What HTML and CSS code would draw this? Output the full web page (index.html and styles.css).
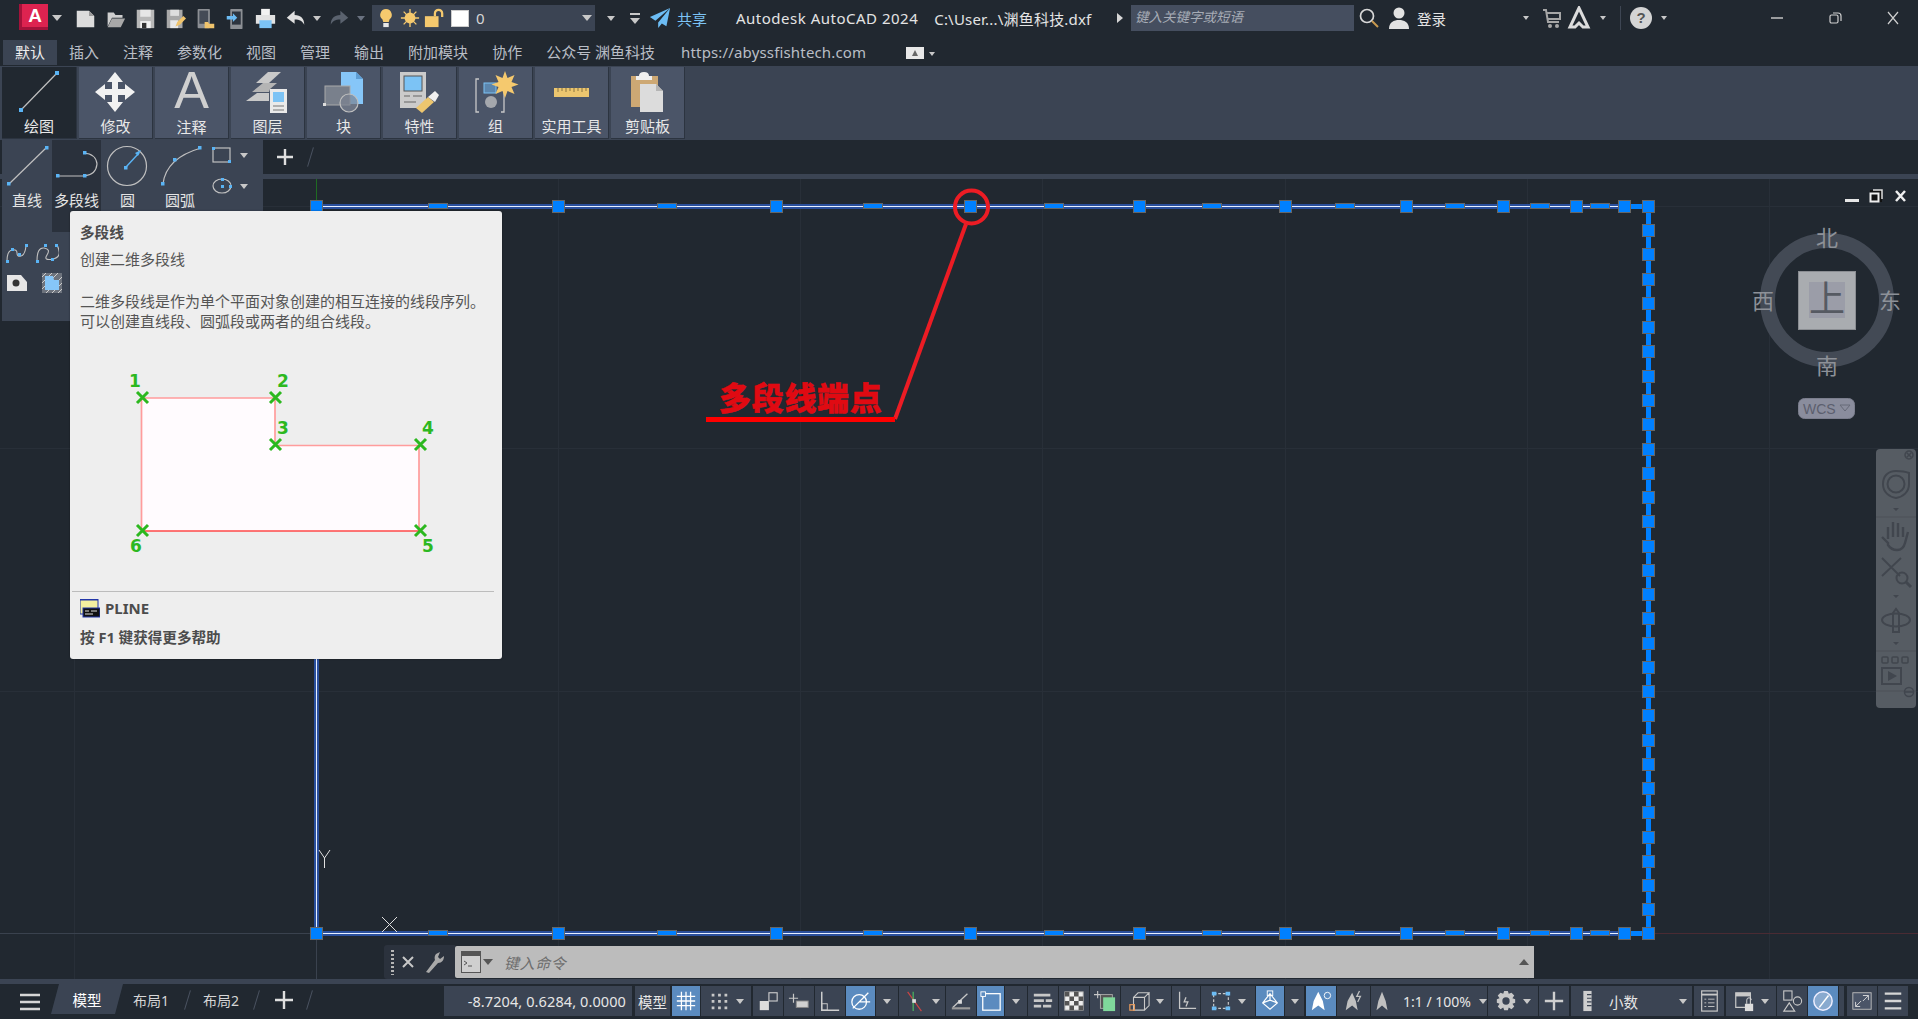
FILE: index.html
```html
<!DOCTYPE html>
<html lang="zh-CN">
<head>
<meta charset="utf-8">
<title>Autodesk AutoCAD 2024</title>
<link rel="stylesheet" href="styles.css">
</head>
<body>
<div class="app">

<header class="titlebar">
  <div class="logo"><span>A</span></div>
  <i class="dd dd-logo"></i>
  <button class="qbtn"><svg viewBox="0 0 24 24"><path d="M2 3h14l6 6v13H2z" fill="#dcdcdc"/><path d="M16 3v6h6" fill="#9a9a9a"/></svg></button>
  <button class="qbtn"><svg viewBox="0 0 24 24"><path d="M3 21V5h7l2 3h8v3H8z" fill="#cfcfcf"/><path d="M3 22l5-10h15l-5 10z" fill="#a8a8a8"/></svg></button>
  <button class="qbtn"><svg viewBox="0 0 24 24"><path d="M2 2h20v21H2z" fill="#b8b8b8"/><path d="M6 2h12v8H6z" fill="#e6e6e6"/><path d="M6 15h12v8H6z" fill="#f2f2f2"/><path d="M8 17h5v6H8z" fill="#333"/></svg></button>
  <button class="qbtn"><svg viewBox="0 0 24 24"><path d="M2 2h18v21H2z" fill="#a8a8a8"/><path d="M6 2h10v7H6z" fill="#dedede"/><path d="M6 14h9v9H6z" fill="#e8e8e8"/><path d="M12 21l2-5 7-7 3 3-7 7z" fill="#f0c46c"/></svg></button>
  <button class="qbtn"><svg viewBox="0 0 24 24"><rect x="3" y="1" width="14" height="22" rx="1" fill="#8c8f94"/><rect x="5" y="3" width="10" height="15" fill="#444b56"/><path d="M11 16h4l1 2h6v5H11z" fill="#f0c46c"/></svg></button>
  <button class="qbtn"><svg viewBox="0 0 24 24"><rect x="6" y="1" width="14" height="23" rx="1" fill="#8c8f94"/><rect x="8" y="4" width="10" height="15" fill="#2d343e"/><path d="M2 9h7V6l5 5-5 5v-3H2z" fill="#6cbcf4"/></svg></button>
  <button class="qbtn"><svg viewBox="0 0 24 24"><path d="M7 1h10v7H7z" fill="#f2f2f2"/><path d="M1 8h22v10H1z" fill="#e2e2e2"/><path d="M5 14h14v9H5z" fill="#7cc3f5"/></svg></button>
  <button class="qbtn"><svg viewBox="0 0 24 24"><path d="M2 11l9-8v5c7 0 11 4 11 11-2-4-5-6-11-6v5z" fill="#e0e0e0"/></svg></button>
  <i class="dd dd14"></i>
  <button class="qbtn"><svg viewBox="0 0 24 24"><path d="M22 11l-9-8v5C6 8 2 12 2 19c2-4 5-6 11-6v5z" fill="#5a626e"/></svg></button>
  <i class="dd dd14 dim"></i>
  <div class="layer-combo">
    <svg class="lic" viewBox="0 0 22 22"><path d="M11 1a6.500 6.500 0 0 1 4 11.500l-1 3H8l-1-3A6.500 6.500 0 0 1 11 1z" fill="#f5c96e"/><path d="M8 16.500h6V21H8z" fill="#e8e8e8"/></svg>
    <svg class="lic" viewBox="0 0 22 22"><circle cx="11" cy="11" r="6" fill="#f5c96e"/><path d="M11 1v20M1 11h20M4 4l14 14M18 4L4 18" stroke="#f5c96e" stroke-width="1.500"/></svg>
    <svg class="lic" viewBox="0 0 22 22"><path d="M12 9V6a4 4 0 0 1 8 0v4" fill="none" stroke="#f5c96e" stroke-width="2.500"/><rect x="1" y="9" width="15" height="12" fill="#f5c96e"/></svg>
    <span class="swatch"></span>
    <span class="layer-name">0</span>
    <i class="dd dd-end"></i>
  </div>
  <i class="dd dd-qa"></i>
  <svg class="qa-more" viewBox="0 0 14 14"><path d="M2 2h10v2H2z" fill="#c8c8c8"/><path d="M2 7h10l-5 6z" fill="#c8c8c8"/></svg>
  <svg class="plane" viewBox="0 0 24 24"><path d="M23 1L1 11l6 4L23 1 10 17v6l4-5 5 3z" fill="#6cbcf4"/></svg>
  <span class="share">共享</span>
  <div class="title"><span class="t1">Autodesk AutoCAD 2024</span><span class="t2">C:\User...\渊鱼科技.dxf</span></div>
  <i class="ar"></i>
  <div class="search">键入关键字或短语</div>
  <svg class="ic-mag" viewBox="0 0 22 22"><circle cx="9" cy="9" r="6.500" fill="none" stroke="#d8d8d8" stroke-width="1.700"/><path d="M14 14l6 6" stroke="#c99a50" stroke-width="2"/></svg>
  <svg class="ic-person" viewBox="0 0 22 24"><circle cx="11" cy="7" r="5.500" fill="#e2e2e2"/><path d="M1 23c0-7 5-9 10-9s10 2 10 9z" fill="#e2e2e2"/></svg>
  <span class="login">登录</span>
  <i class="dd dd-login"></i>
  <svg class="ic-cart" viewBox="0 0 20 22"><path d="M1 3h3l2 12h11M5 6h13v6H6" fill="none" stroke="#a6a6a6" stroke-width="2"/><circle cx="8" cy="19" r="2" fill="#a6a6a6"/><circle cx="15" cy="19" r="2" fill="#a6a6a6"/></svg>
  <svg class="ic-a" viewBox="0 0 24 24"><path d="M12 2L3 21h5l4-4 4 4h5z" fill="none" stroke="#dcdcdc" stroke-width="3"/></svg>
  <i class="dd dd-a"></i>
  <i class="tsep"></i>
  <span class="help">?</span>
  <i class="dd dd-help"></i>
  <svg class="win min" viewBox="0 0 14 14"><path d="M1 7h12" stroke="#cfcfcf" stroke-width="1.400"/></svg>
  <svg class="win max" viewBox="0 0 14 14"><rect x="2" y="4" width="8" height="8" rx="1.500" fill="none" stroke="#cfcfcf" stroke-width="1.200"/><path d="M5 2h5q3 0 3 3v5" fill="none" stroke="#cfcfcf" stroke-width="1.200"/></svg>
  <svg class="win cls" viewBox="0 0 14 14"><path d="M2 1l10 12M12 1L2 13" stroke="#cfcfcf" stroke-width="1.200"/></svg>
</header>

<nav class="tabs">
  <span class="tab on">默认</span><span class="tab">插入</span><span class="tab">注释</span><span class="tab">参数化</span><span class="tab">视图</span><span class="tab">管理</span><span class="tab">输出</span><span class="tab">附加模块</span><span class="tab">协作</span><span class="tab wide">公众号 渊鱼科技</span><span class="tab link">https://abyssfishtech.com</span>
  <span class="tab-box"><svg viewBox="0 0 18 12"><path d="M9 3l3 6H6z" fill="#666"/></svg></span><i class="dd dd-tab"></i>
</nav>

<section class="ribbon">
  <div class="rb active"><svg viewBox="0 0 74 44"><path d="M19 40L55 3" stroke="#c0c0c0" stroke-width="1.200"/><rect x="17" y="38" width="4" height="4" fill="#5ab4f5"/><rect x="53" y="1" width="4" height="4" fill="#5ab4f5"/></svg><span>绘图</span></div>
  <div class="rb"><svg viewBox="0 0 74 44"><path d="M36 2l8 10h-5v7h7v-5l10 8-10 8v-5h-7v7h5l-8 10-8-10h5v-7h-7v5l-10-8 10-8v5h7v-7h-5z" fill="#f2f2f2"/></svg><span>修改</span></div>
  <div class="rb"><span class="big-a">A</span><span>注释</span></div>
  <div class="rb"><svg viewBox="0 0 74 44"><path d="M25 13L37 2h13L38 13z" fill="#c9c9c9"/><path d="M21 22l11-9h14l-7 6-1 3z" fill="#b4b4b4"/><path d="M15 31l11-8h12v8z" fill="#c9c9c9"/><rect x="39" y="19" width="17" height="24" fill="#eaeaea"/><rect x="42" y="22" width="11" height="10" fill="#7cc3f5"/><path d="M42 36h11M42 40h11" stroke="#777" stroke-width="1.200"/></svg><span>图层</span></div>
  <div class="rb"><svg viewBox="0 0 74 44"><path d="M34 2h15l7 7v25H34z" fill="#86c6f8"/><path d="M49 2v7h7" fill="#5e9ed4"/><rect x="18" y="16" width="25" height="19" fill="#79808c" stroke="#a9a9a9"/><rect x="16" y="33" width="3" height="3" fill="#ddd"/><circle cx="42" cy="33" r="9" fill="#7b8290" fill-opacity=".7" stroke="#bfbfbf" stroke-width="1.200"/></svg><span>块</span></div>
  <div class="rb"><svg viewBox="0 0 74 44"><rect x="17" y="2" width="26" height="36" fill="#cbcbcb"/><rect x="21" y="6" width="18" height="15" fill="#7cc3f5" stroke="#555"/><path d="M21 26h6M30 26h9M21 32h12" stroke="#666" stroke-width="1.200"/><path d="M33 38l12-11 6 5-12 11z" fill="#ecc66f"/><path d="M45 27l7-6 4 4-4 7z" fill="#f0f0f0"/></svg><span>特性</span></div>
  <div class="rb"><svg viewBox="0 0 74 44"><path d="M20 9h-3v33h3M42 9h3v33h-3" fill="none" stroke="#c8c8c8" stroke-width="1.300"/><rect x="25" y="13" width="12" height="10" fill="#5c86ad" stroke="#7cc3f5"/><circle cx="32" cy="32" r="6" fill="#a5a8ad"/><path d="M46 1l2.500 7 7-3-3 7 7 2.500-7 2.500 3 7-7-3-2.500 7-2.500-7-7 3 3-7-7-2.500 7-2.500-3-7 7 3z" fill="#f5c96e"/></svg><span>组</span></div>
  <div class="rb"><svg viewBox="0 0 74 44"><rect x="19" y="18" width="35" height="9" fill="#ecc66f"/><path d="M23 18v4M27 18v3M31 18v4M35 18v3M39 18v4M43 18v3M47 18v4M51 18v3" stroke="#8a7540" stroke-width="1"/></svg><span>实用工具</span></div>
  <div class="rb"><svg viewBox="0 0 74 44"><rect x="20" y="6" width="27" height="31" fill="#cda874"/><path d="M28 6q0-4 5-4t5 4h3v4H25V6z" fill="#f0f0f0"/><path d="M29 14h16l7 7v21H29z" fill="#dcdcdc"/><path d="M45 14v7h7" fill="#b5b5b5"/></svg><span>剪贴板</span></div>
</section>

<section class="filebar"><svg class="plus" viewBox="0 0 20 20"><path d="M10 2v16M2 10h16" stroke="#dfdfdf" stroke-width="2.400"/></svg><i class="slash"></i></section>
<div class="strip"></div>

<main class="canvas">
  <svg class="drawing" viewBox="0 179 1918 800" width="1918" height="800">
    <defs>
      <rect id="g" x="-5.500" y="-5.500" width="12" height="12" fill="#0080ff" stroke="#666"/>
      <rect id="m" x="-9.500" y="-2.500" width="19" height="5" fill="#0080ff" stroke="#666"/>
    </defs>
    <g class="grid">
      <path d="M74.500 179v800M316.500 179v800M558.500 179v800M800.500 179v800M1042.500 179v800M1285.500 179v800M1527.500 179v800M1769.500 179v800M0 206.500h1918M0 448.500h1918M0 691.500h1918"/>
      <path class="axis" d="M0 933.500h317M316.500 933v46"/>
    </g>
    <path d="M316.500 179v22" stroke="#1f6b22"/>
    <path d="M1654 933.500h264" stroke="#4a2b33"/>
    <path class="pl-blue" d="M316 206.500H1648M316 933.500H1648M316.500 206V934"/>
    <path class="pl-white" d="M316 206.500H1648M316 933.500H1648M316.500 206V934"/>
    <path class="pl-thick" d="M1648.500 206v728M1624 206.500h24M1624 933.500h24"/>
    <path class="ucs" d="M319 850l5.500 8 5.500-8M324.500 858v10M382 917l15 15M397 917l-15 15"/>
    <g id="top">
      <use href="#m" x="438" y="206"/><use href="#m" x="667" y="206"/><use href="#m" x="873" y="206"/><use href="#m" x="1054" y="206"/><use href="#m" x="1212" y="206"/><use href="#m" x="1345" y="206"/><use href="#m" x="1455" y="206"/><use href="#m" x="1540" y="206"/><use href="#m" x="1600" y="206"/>
      <use href="#g" x="316" y="206"/><use href="#g" x="558" y="206"/><use href="#g" x="776" y="206"/><use href="#g" x="970" y="206"/><use href="#g" x="1139" y="206"/><use href="#g" x="1285" y="206"/><use href="#g" x="1406" y="206"/><use href="#g" x="1503" y="206"/><use href="#g" x="1576" y="206"/><use href="#g" x="1624" y="206"/><use href="#g" x="1648" y="206"/>
    </g>
    <g>
      <use href="#m" x="438" y="933"/><use href="#m" x="667" y="933"/><use href="#m" x="873" y="933"/><use href="#m" x="1054" y="933"/><use href="#m" x="1212" y="933"/><use href="#m" x="1345" y="933"/><use href="#m" x="1455" y="933"/><use href="#m" x="1540" y="933"/><use href="#m" x="1600" y="933"/>
      <use href="#g" x="316" y="933"/><use href="#g" x="558" y="933"/><use href="#g" x="776" y="933"/><use href="#g" x="970" y="933"/><use href="#g" x="1139" y="933"/><use href="#g" x="1285" y="933"/><use href="#g" x="1406" y="933"/><use href="#g" x="1503" y="933"/><use href="#g" x="1576" y="933"/><use href="#g" x="1624" y="933"/><use href="#g" x="1648" y="933"/>
    </g>
    <g>
      <use href="#g" x="1648" y="230"/><use href="#g" x="1648" y="254"/><use href="#g" x="1648" y="279"/><use href="#g" x="1648" y="303"/><use href="#g" x="1648" y="327"/><use href="#g" x="1648" y="351"/><use href="#g" x="1648" y="376"/><use href="#g" x="1648" y="400"/><use href="#g" x="1648" y="424"/><use href="#g" x="1648" y="449"/><use href="#g" x="1648" y="473"/><use href="#g" x="1648" y="497"/><use href="#g" x="1648" y="521"/><use href="#g" x="1648" y="546"/><use href="#g" x="1648" y="570"/><use href="#g" x="1648" y="594"/><use href="#g" x="1648" y="618"/><use href="#g" x="1648" y="643"/><use href="#g" x="1648" y="667"/><use href="#g" x="1648" y="691"/><use href="#g" x="1648" y="715"/><use href="#g" x="1648" y="740"/><use href="#g" x="1648" y="764"/><use href="#g" x="1648" y="788"/><use href="#g" x="1648" y="812"/><use href="#g" x="1648" y="837"/><use href="#g" x="1648" y="861"/><use href="#g" x="1648" y="885"/><use href="#g" x="1648" y="909"/>
    </g>

    <g class="note">
      <circle cx="971.500" cy="207" r="16.500"/>
      <path d="M966 224L895 419"/>
      <path class="note-base" d="M706 419.500H895"/>
      <text x="719" y="410" class="note-text">多段线端点</text>
    </g>

    <g class="vp-ctl">
      <path d="M1845 199h14v3h-14z" fill="#e6e6e6"/>
      <rect x="1870" y="190" width="12" height="12" fill="#111"/>
      <path d="M1873 190h9v9" fill="none" stroke="#ddd" stroke-width="1.500"/><rect x="1870.500" y="193.500" width="8" height="8" fill="none" stroke="#eee" stroke-width="2"/>
      <path d="M1896 191l9 10M1905 191l-9 10" stroke="#eee" stroke-width="2.500"/>
    </g>

    <g class="cube">
      <circle cx="1827" cy="300" r="59.500" fill="none" stroke="#434a55" stroke-width="15"/>
      <rect x="1798.500" y="271.500" width="57" height="58" fill="#a9acb0" stroke="#8a8d92"/>
      <rect x="1809" y="282" width="36" height="36" fill="#9b9da8"/>
      <text x="1827" y="312" class="cube-top">上</text>
      <text x="1827" y="246" class="cube-dir">北</text>
      <text x="1827" y="374" class="cube-dir">南</text>
      <text x="1763" y="309" class="cube-dir">西</text>
      <text x="1890" y="309" class="cube-dir">东</text>
      <rect x="1798.500" y="398.500" width="56" height="20" rx="6" fill="#8a8d9d" stroke="#7b7e8d"/>
      <text x="1803" y="414" class="wcs">WCS</text>
      <path d="M1840 405h10l-5 6z" fill="none" stroke="#666a78"/>
    </g>

    <g class="navbar">
      <rect x="1876" y="449" width="40" height="259" rx="4" fill="#565c63"/>
      <g fill="none" stroke="#41464e" stroke-width="1.500">
        <circle cx="1909" cy="455" r="4"/><path d="M1906.500 452.500l5 5M1911.500 452.500l-5 5"/>
        <path d="M1896 471c8 0 13 2 13 2v11c0 8-6 13-13 14-7-1-13-6-13-14 0-8 5-13 13-13z" stroke-width="2"/>
        <circle cx="1896" cy="484" r="8.500" stroke-width="2"/>
        <path d="M1876 517h40M1876 651h40M1876 691h40" stroke="#4c5158" stroke-width="1"/>
        <path d="M1882 537l6 6v2c2 3 5 5 9 5s7-3 8-7l3-11M1888 539v-12M1893 537v-15M1898 537v-14M1903 537v-10" stroke-width="2.400"/>
        <path d="M1882 558l18 18M1901 558l-19 18" stroke-width="1.800"/>
        <circle cx="1902" cy="578" r="5.500" stroke-width="2"/><path d="M1906 582l5 5" stroke-width="3"/>
        <path d="M1893 632v-19l3-4 3 4v19z" stroke-width="2"/>
        <ellipse cx="1896" cy="620" rx="14" ry="6.500" stroke-width="2"/>
        <rect x="1882" y="657" width="6" height="6" rx="1"/><rect x="1892" y="657" width="6" height="6" rx="1"/><rect x="1902" y="657" width="6" height="6" rx="1"/>
        <rect x="1882" y="668" width="19" height="16" stroke-width="2"/>
        <circle cx="1909" cy="692" r="4.500"/><path d="M1905 692h8"/>
      </g>
      <path d="M1888 671l9 5-9 5z" fill="#41464e"/>
      <path d="M1893 508h6l-3 3zM1893 595h6l-3 3zM1893 642h6l-3 3z" fill="#41464e"/>
    </g>
  </svg>

  <div class="cmd">
    <div class="cmd-side">
      <i class="cmd-grab"></i>
      <svg class="cmd-x" viewBox="0 0 12 12"><path d="M1 1l10 10M11 1L1 11" stroke="#c8c8c8" stroke-width="2"/></svg>
      <svg class="cmd-w" viewBox="0 0 20 24"><path d="M2 22l9-12c-1-3 0-6 3-7l2-1-2 5 2 2 4-3c0 4-2 7-6 7L5 23z" fill="#a9a9a9"/></svg>
    </div>
    <div class="cmd-input">
      <svg class="cmd-ic" viewBox="0 0 20 22"><rect x=".5" y=".5" width="19" height="21" fill="#cfcfcf" stroke="#555"/><rect x="1" y="1" width="18" height="4" fill="#555"/><path d="M3 10l3 2-3 2M7 15h4" stroke="#555" fill="none"/></svg>
      <i class="dd dd-cmd"></i>
      <span class="cmd-text">键入命令</span>
      <i class="cmd-up"></i>
    </div>
  </div>
</main>

<div class="strip"></div>

<footer class="status">
  <svg class="menu" viewBox="0 0 22 20"><path d="M1 3h20M1 10h20M1 17h20" stroke="#d6d6d6" stroke-width="2.400"/></svg>
  <span class="mtab"><b>模型</b></span>
  <span class="ltab">布局1</span><i class="slash s-a"></i>
  <span class="ltab l2">布局2</span><i class="slash s-b"></i>
  <svg class="plus p-s" viewBox="0 0 20 20"><path d="M10 1v18M1 10h18" stroke="#dfdfdf" stroke-width="2.400"/></svg>
  <i class="slash s-c"></i>

  <div class="tray">
    <span class="si coords">-8.7204, 0.6284, 0.0000</span>
    <span class="si w35 gap">模型</span>
    <span class="si w28 on"><svg viewBox="0 0 24 24"><path d="M7 2v20M12 2v20M17 2v20M2 7h20M2 12h20M2 17h20" stroke="#fff" stroke-width="1.400"/></svg></span>
    <span class="si w50 gap"><svg viewBox="0 0 24 24"><path d="M4 4h3v3H4zM11 4h3v3h-3zM18 4h3v3h-3zM4 11h3v3H4zM11 11h3v3h-3zM18 11h3v3h-3zM4 18h3v3H4zM11 18h3v3h-3zM18 18h3v3h-3z" fill="#c8c8c8"/></svg><i class="dd"></i></span>
    <span class="si"><svg viewBox="0 0 24 24"><rect x="3" y="12" width="10" height="10" fill="#dcdcdc"/><rect x="13" y="3" width="9" height="9" fill="none" stroke="#cfcfcf" stroke-width="1.200"/></svg></span>
    <span class="si"><svg viewBox="0 0 24 24"><path d="M6 4v10M1 9h10" stroke="#c8c8c8" stroke-width="1.300"/><rect x="9" y="12" width="13" height="7" fill="#d0d0d0" stroke="#888"/></svg></span>
    <span class="si"><svg viewBox="0 0 24 24"><path d="M3 2v20h19" fill="none" stroke="#cfcfcf" stroke-width="1.600"/><rect x="3" y="15" width="6" height="7" fill="none" stroke="#cfcfcf"/></svg></span>
    <span class="si w29 on"><svg viewBox="0 0 24 24"><circle cx="10" cy="13" r="8" fill="none" stroke="#fff" stroke-width="1.400"/><path d="M3 20L20 3M10 13h12" stroke="#fff" stroke-width="1.400"/></svg></span>
    <span class="si w22"><i class="dd"></i></span>
    <span class="si w46"><svg viewBox="0 0 24 24"><path d="M4 2l15 21" stroke="#c44" stroke-width="1.300"/><path d="M10 2v21" stroke="#4cb860" stroke-width="1.300"/><rect x="9" y="10" width="4" height="4" fill="#ddd"/></svg><i class="dd"></i></span>
    <span class="si"><svg viewBox="0 0 24 24"><path d="M3 19L19 4" stroke="#c8c8c8" stroke-width="1.400"/><path d="M2 20h20" stroke="#9a9a9a" stroke-width="2.400"/><rect x="9" y="11" width="4" height="4" fill="#ddd"/></svg></span>
    <span class="si w27 on"><svg viewBox="0 0 24 24"><rect x="3" y="4" width="19" height="18" fill="none" stroke="#fff" stroke-width="1.400"/><rect x="1" y="2" width="5" height="5" fill="#5b8bbf" stroke="#fff"/></svg></span>
    <span class="si w22"><i class="dd"></i></span>
    <span class="si"><svg viewBox="0 0 24 24"><path d="M2 4h18v3H2zM2 10h11v3H2zM2 16h8v3H2zM15 10h7v3h-7zM12 16h9v3h-9z" fill="#c8c8c8"/></svg></span>
    <span class="si"><svg viewBox="0 0 24 24"><rect x="2" y="2" width="20" height="20" fill="#eee" stroke="#aaa"/><path d="M2 2h5v5H2zM12 2h5v5h-5zM7 7h5v5H7zM17 7h5v5h-5zM2 12h5v5H2zM12 12h5v5h-5zM7 17h5v5H7zM17 17h5v5h-5z" fill="#555"/></svg></span>
    <span class="si"><svg viewBox="0 0 24 24"><path d="M4 1v8M0 5h8" stroke="#c8c8c8" stroke-width="1.200"/><rect x="7" y="5" width="13" height="15" fill="#555" stroke="#aaa"/><rect x="10" y="8" width="13" height="15" fill="#7fd89b"/></svg></span>
    <span class="si w50"><svg viewBox="0 0 24 24"><path d="M6 8h12v14H6zM6 8l5-5h12l-5 5M18 22l5-5V3" fill="none" stroke="#c8c8c8" stroke-width="1.200"/><rect x="2" y="16" width="5" height="6" fill="none" stroke="#e89a5a" stroke-width="1.300"/></svg><i class="dd"></i></span>
    <span class="si w28"><svg viewBox="0 0 24 24"><path d="M5 2v18h18" fill="none" stroke="#c8c8c8" stroke-width="1.400"/><path d="M12 8l-2 5h4l-2 5" fill="none" stroke="#c8c8c8" stroke-width="1.400"/></svg></span>
    <span class="si w54"><svg viewBox="0 0 24 24"><rect x="4" y="4" width="16" height="16" fill="none" stroke="#c8c8c8" stroke-width="1.300" stroke-dasharray="3 2"/><path d="M2 2h5v4H2zM17 2h5v4h-5zM2 18h5v4H2zM17 18h5v4h-5z" fill="#6cbcf4"/></svg><i class="dd"></i></span>
    <span class="si w28 on"><svg viewBox="0 0 24 24"><path d="M12 4L4 14l8 7 8-7zM12 4v7M4 14l8-3 8 3" fill="none" stroke="#fff" stroke-width="1.300"/><rect x="9" y="1" width="6" height="5" fill="none" stroke="#fff"/></svg></span>
    <span class="si w19 gap"><i class="dd"></i></span>
    <span class="si on"><svg viewBox="0 0 24 24"><path d="M9 2l5 10 2 10-7-5-7 5 2-10z" fill="#fff"/><circle cx="19" cy="6" r="3.500" fill="none" stroke="#fff"/></svg></span>
    <span class="si w33"><svg viewBox="0 0 24 24"><path d="M10 3l4 9 2 10-6-5-7 5 2-10z" fill="#c0c0c0"/><path d="M18 1l-3 6h4l-3 6" fill="none" stroke="#c0c0c0" stroke-width="1.400"/></svg></span>
    <span class="si w116 scale"><svg viewBox="0 0 24 24"><path d="M12 2l4 10 2 10-6-5-6 5 2-10z" fill="#c0c0c0"/></svg><em>1:1 / 100%</em><i class="dd"></i></span>
    <span class="si w50"><svg viewBox="0 0 24 24"><path d="M10 1h4l1 3 3-1 3 3-2 3 3 1v4l-3 1 2 3-3 3-3-2-1 3h-4l-1-3-3 2-3-3 2-3-3-1v-4l3-1-2-3 3-3 3 1z" fill="#c8c8c8"/><circle cx="12" cy="12" r="4" fill="#3b4453"/></svg><i class="dd"></i></span>
    <span class="si gap"><svg viewBox="0 0 24 24"><path d="M12 2v20M2 12h20" stroke="#cfcfcf" stroke-width="2.600"/></svg></span>
    <span class="si units"><svg viewBox="0 0 24 24"><path d="M8 1h9v22H8z" fill="#cfcfcf"/><path d="M12 5h5M12 9h5M12 13h5M12 17h5" stroke="#3b4453" stroke-width="1.200"/></svg><em>小数</em><i class="dd"></i></span>
    <span class="si gap"><svg viewBox="0 0 24 24"><rect x="4" y="1" width="17" height="22" fill="none" stroke="#c8c8c8" stroke-width="1.300"/><path d="M4 5h17" stroke="#c8c8c8" stroke-width="2"/><path d="M7 10h2M11 10h7M7 14h2M11 14h7M7 18h2M11 18h7" stroke="#c8c8c8"/></svg></span>
    <span class="si w50"><svg viewBox="0 0 24 24"><path d="M3 3h16v16H3z" fill="none" stroke="#c8c8c8" stroke-width="1.300"/><path d="M3 3h16v4H3z" fill="#c8c8c8"/><rect x="13" y="15" width="9" height="8" fill="#ddd"/><path d="M15 15v-4a2.500 2.500 0 0 1 5 0" fill="none" stroke="#ddd"/></svg><i class="dd"></i></span>
    <span class="si"><svg viewBox="0 0 24 24"><rect x="3" y="1" width="9" height="10" fill="none" stroke="#c8c8c8" stroke-width="1.200"/><circle cx="18" cy="12" r="4.500" fill="none" stroke="#c8c8c8" stroke-width="1.200"/><path d="M9 14l6 9H3z" fill="none" stroke="#c8c8c8" stroke-width="1.200"/></svg></span>
    <span class="si on"><svg viewBox="0 0 24 24"><circle cx="12" cy="12" r="10" fill="#dfe6ee" fill-opacity=".35" stroke="#eef" stroke-width="1.600"/><path d="M8 19L18 6" stroke="#fff" stroke-width="1.600"/></svg></span>
    <span class="si w5 gap2"></span>
    <span class="si"><svg viewBox="0 0 24 24"><rect x="2" y="3" width="20" height="18" fill="#4b5568" stroke="#bdbdbd"/><path d="M13 6h6v5M5 18l6-6M5 13v5h5M19 6l-6 6" fill="none" stroke="#ddd"/></svg></span>
    <span class="si"><svg viewBox="0 0 24 24"><path d="M3 4h18M3 12h18M3 20h18" stroke="#d6d6d6" stroke-width="2.600"/></svg></span>
  </div>
</footer>

<aside class="draw-panel">
  <div class="draw-row">
    <div class="db d1"><svg viewBox="0 0 50 46"><path d="M7 41L44 5" stroke="#c0c0c0" stroke-width="1.200"/><rect x="5" y="39" width="3.500" height="3.500" fill="#5ab4f5"/><rect x="43" y="3" width="3.500" height="3.500" fill="#5ab4f5"/></svg><span>直线</span></div>
    <div class="db d2"><svg viewBox="0 0 49 46"><path d="M6 33h26q12-1 13-12-1-10-13-11" fill="none" stroke="#c0c0c0" stroke-width="1.200"/><rect x="4" y="31" width="3.500" height="3.500" fill="#5ab4f5"/><rect x="31" y="31" width="3.500" height="3.500" fill="#5ab4f5"/><rect x="31" y="8" width="3.500" height="3.500" fill="#5ab4f5"/></svg><span>多段线</span></div>
    <div class="db d3"><svg viewBox="0 0 53 46"><circle cx="26" cy="23" r="19.500" fill="none" stroke="#c0c0c0" stroke-width="1.200"/><path d="M25 24L38 10" stroke="#5ab4f5" stroke-width="1.400"/><rect x="23" y="23" width="3.500" height="3.500" fill="#5ab4f5"/><path d="M40 7l-6 3 3 3z" fill="#5ab4f5"/></svg><span>圆</span></div>
    <div class="db d4"><svg viewBox="0 0 52 46"><path d="M9 41q3-26 38-36" fill="none" stroke="#c0c0c0" stroke-width="1.200"/><rect x="7" y="39" width="3.500" height="3.500" fill="#5ab4f5"/><rect x="19" y="15" width="3.500" height="3.500" fill="#5ab4f5"/><rect x="44" y="3" width="3.500" height="3.500" fill="#5ab4f5"/></svg><span>圆弧</span></div>
    <div class="dm">
      <div class="dmi"><svg viewBox="0 0 22 20"><rect x="2" y="3" width="17" height="14" fill="none" stroke="#c0c0c0" stroke-width="1.200"/><rect x="1" y="2" width="3" height="3" fill="#5ab4f5"/><rect x="17" y="15" width="3" height="3" fill="#5ab4f5"/></svg><i class="dd"></i></div>
      <div class="dmi"><svg viewBox="0 0 22 20"><ellipse cx="11" cy="10" rx="9" ry="7" fill="none" stroke="#c0c0c0" stroke-width="1.200"/><rect x="10" y="2" width="3" height="3" fill="#5ab4f5"/><rect x="10" y="9" width="3" height="3" fill="#5ab4f5"/><rect x="18" y="9" width="3" height="3" fill="#5ab4f5"/></svg><i class="dd"></i></div>
    </div>
  </div>
  <div class="draw-small">
    <svg viewBox="0 0 24 22"><path d="M2 20q0-10 5-11t5 3 4 3 5-10" fill="none" stroke="#c0c0c0" stroke-width="1.100"/><path d="M1 19h3v3H1zM6 7h3v3H6zM13 12h3v3h-3zM20 3h3v3h-3z" fill="#5ab4f5"/></svg>
    <svg viewBox="0 0 24 22"><path d="M2 20q0-14 7-13t3 7 6 4 4-14" fill="none" stroke="#c0c0c0" stroke-width="1.100"/><path d="M1 19h3v3H1zM9 3h3v3H9zM16 17h3v3h-3zM20 3h3v3h-3z" fill="#5ab4f5"/></svg>
  </div>
  <div class="draw-small s2">
    <svg viewBox="0 0 22 18"><path d="M1 1h14l6 7v9H1z" fill="#e6e6e6"/><circle cx="10" cy="9" r="3.500" fill="#333"/></svg>
    <svg class="hatch" viewBox="0 0 22 22"><rect x="1" y="1" width="20" height="20" fill="#6d737d"/><path d="M1 5l4-4M1 11L11 1M1 17L17 1M5 21L21 5M11 21l10-10M17 21l4-4" stroke="#cfcfcf"/><path d="M4 4h8l1 4h5v10H4z" fill="#86c6f8"/></svg>
  </div>
</aside>

<aside class="tooltip">
  <div class="tt-title">多段线</div>
  <div class="tt-sub">创建二维多段线</div>
  <div class="tt-body">二维多段线是作为单个平面对象创建的相互连接的线段序列。<br>可以创建直线段、圆弧段或两者的组合线段。</div>
  <svg class="tt-fig" viewBox="70 370 432 190" width="432" height="190">
    <path d="M141.500 398H275v47.500H419V531H141.500z" fill="#fffbfe"/>
    <path d="M141.500 531V398H275v47.500H419V531" fill="none" stroke="#ff9c9c" stroke-width="1.700"/>
    <path d="M141.500 531H419" stroke="#ff4848" stroke-width="1.400"/>
    <path class="tt-x" d="M137 392l11 11M148 392l-11 11M270 392l11 11M281 392l-11 11M270 439l11 11M281 439l-11 11M415 439l11 11M426 439l-11 11M137 525l11 11M148 525l-11 11M415 525l11 11M426 525l-11 11"/>
    <text class="tt-n" x="135" y="387">1</text><text class="tt-n" x="283" y="387">2</text><text class="tt-n" x="283" y="434">3</text><text class="tt-n" x="428" y="434">4</text><text class="tt-n" x="428" y="552">5</text><text class="tt-n" x="136" y="552">6</text>
  </svg>
  <div class="tt-sep"></div>
  <div class="tt-cmd"><svg viewBox="0 0 20 19"><rect x="0" y="0" width="18" height="15" fill="#f5f0a0" stroke="#2236a8"/><path d="M0 0h18v1.500H0z" fill="#2236a8"/><rect x="3" y="9" width="17" height="9" fill="#111" stroke="#2236a8"/><path d="M5 12h4M11 12h6M5 15h8" stroke="#ddd"/></svg><b>PLINE</b></div>
  <div class="tt-help">按 F1 键获得更多帮助</div>
</aside>

</div>
</body>
</html>
```
FILE: styles.css
```css
* { box-sizing: border-box; }
html, body { margin: 0; padding: 0; height: 100%; overflow: hidden; background: #212830; }
body { font-family: "Noto Sans", "Noto Sans CJK SC", sans-serif; color: #d6d6d6; }
button { border: 0; padding: 0; background: none; }
i { display: block; font-style: normal; flex: none; }
svg { display: block; flex: none; }

.app { position: relative; width: 1918px; height: 1019px; display: flex; flex-direction: column; background: #212830; }

/* generic dropdown triangle */
.dd { width: 0; height: 0; border-left: 5px solid transparent; border-right: 5px solid transparent; border-top: 6px solid #c8c8c8; }
.dd.dim { border-top-color: #6a7280; }

/* title bar */
.titlebar { height: 36px; flex: none; display: flex; align-items: center; padding-left: 19px; background: #212830; font-size: 14.5px; }
.logo { width: 29px; height: 26px; margin-top: -2px; background: #a3123a; padding: 0 0 3px 3px; }
.logo span { display: flex; width: 26px; height: 23px; background: #dd2350; color: #fff; font: bold 19px/23px "Liberation Sans", sans-serif; justify-content: center; }
.dd-logo { margin: 0 8px 0 4px; }
.qbtn { width: 30px; height: 28px; display: flex; align-items: center; justify-content: center; flex: none; }
.qbtn svg { width: 21px; height: 21px; }
.dd14 { border-left-width: 4px; border-right-width: 4px; border-top-width: 5px; margin-left: 3px; margin-right: 3px; }
.layer-combo { width: 223px; height: 26px; margin-left: 4px; background: #3b4453; display: flex; align-items: center; padding-left: 3px; }
.lic { width: 22px; height: 20px; margin-right: 2px; }
.swatch { width: 18px; height: 17px; background: #fff; margin-left: 4px; border: 1px solid #ccc; }
.layer-name { margin-left: 7px; font-size: 15px; }
.dd-end { margin-left: auto; margin-right: 3px; }
.dd-qa { margin-left: 12px; border-left-width: 4px; border-right-width: 4px; border-top-width: 5px; }
.qa-more { width: 14px; height: 14px; margin-left: 13px; }
.plane { width: 22px; height: 22px; margin-left: 7px; }
.share { margin-left: 6px; width: 32px; color: #7cc3f5; font-size: 15px; white-space: nowrap; }
.title { margin-left: 27px; width: 381px; display: flex; gap: 16px; color: #e4e4e4; font-size: 15px; white-space: nowrap; }
.t1 { letter-spacing: .5px; }
.t2 { letter-spacing: .2px; }
.ar { width: 0; height: 0; border-top: 5px solid transparent; border-bottom: 5px solid transparent; border-left: 6px solid #d6d6d6; margin-right: 8px; }
.search { width: 223px; height: 26px; background: #454e5f; color: #a5abb5; font-size: 13.5px; font-style: italic; line-height: 25px; padding-left: 4px; }
.ic-mag { width: 22px; height: 22px; margin-left: 4px; }
.ic-person { width: 22px; height: 24px; margin-left: 8px; }
.login { margin-left: 7px; width: 30px; font-size: 14.5px; color: #e4e4e4; white-space: nowrap; }
.dd-login { margin-left: 76px; border-left-width: 3px; border-right-width: 3px; border-top-width: 4px; }
.ic-cart { width: 20px; height: 22px; margin-left: 13px; }
.ic-a { width: 24px; height: 24px; margin-left: 5px; }
.dd-a { margin-left: 9px; border-left-width: 3px; border-right-width: 3px; border-top-width: 4px; }
.tsep { width: 1px; height: 24px; background: #3e4653; margin-left: 14px; }
.help { width: 22px; height: 22px; border-radius: 50%; background: #d4d4d4; color: #555; font: bold 15px/22px "Liberation Sans", sans-serif; text-align: center; margin-left: 9px; flex: none; }
.dd-help { margin-left: 9px; border-left-width: 3px; border-right-width: 3px; border-top-width: 4px; }
.win { width: 14px; height: 14px; }
.min { margin-left: 103px; }
.max { margin-left: 44px; }
.cls { margin-left: 44px; }

/* ribbon tabs */
.tabs { height: 30px; flex: none; display: flex; align-items: flex-end; padding: 0 0 1px 3px; font-size: 15px; color: #b9bec6; }
.tab { height: 25px; padding: 0 12px; line-height: 25px; white-space: nowrap; }
.tab.on { background: #3b4453; color: #eee; }
.tab.wide { padding-right: 14px; }
.tab.link { letter-spacing: .16px; }
.tab-box { width: 18px; height: 12px; background: #e8e8e8; margin: 0 5px 6px 28px; }
.tab-box svg { width: 18px; height: 12px; }
.dd-tab { margin-bottom: 9px; border-left-width: 3px; border-right-width: 3px; border-top-width: 4px; }

/* ribbon */
.ribbon { height: 74px; flex: none; display: flex; gap: 2px; padding: 1px 0 1px 2px; background: #3b4453; }
.rb { width: 74px; height: 72px; background: #4b5568; display: flex; flex-direction: column; align-items: center; border: 1px solid #2c3440; border-width: 0 1px 1px 0; }
.rb.active { width: 75px; background: #212830; }
.rb svg { width: 74px; height: 44px; margin-top: 3px; }
.rb span { font-size: 15px; line-height: 22px; margin-top: 1px; color: #e8e8e8; white-space: nowrap; }
.rb .big-a { font: 52px/47px "Liberation Sans", sans-serif; color: #cfcfcf; margin-top: 0; height: 49px; }

/* file tab bar */
.filebar { height: 34px; flex: none; display: flex; align-items: center; padding-left: 275px; }
.plus { width: 20px; height: 20px; }
.slash { width: 1px; height: 20px; background: #4a5260; transform: rotate(17deg); margin-left: 15px; }
.strip { height: 5px; flex: none; background: #3b4453; }

/* canvas */
.canvas { position: relative; flex: 1; min-height: 0; overflow: hidden; }
.drawing { width: 1918px; height: 800px; }
.grid path { fill: none; stroke: #282f38; stroke-width: 1; }
.grid .axis { stroke: #3a424e; }
.pl-blue, .pl-white, .pl-thick { fill: none; }
.pl-blue { stroke: #2a4f9c; stroke-width: 5; }
.pl-white { stroke: #e8f0ff; stroke-width: 1; }
.pl-thick { stroke: #0080ff; stroke-width: 5; }
.ucs { fill: none; stroke: #e0e0e0; stroke-width: 1; }
.note circle, .note path { fill: none; stroke: #ec1c24; stroke-width: 4; }
.note .note-base { stroke: #ff0000; stroke-width: 5; }
.note-text { font: 900 32px "Noto Sans CJK SC", sans-serif; fill: #e00a12; stroke: #e00a12; stroke-width: .5px; letter-spacing: .7px; }
.cube-top { font: 36px "Noto Sans CJK SC", sans-serif; fill: #565a62; text-anchor: middle; }
.cube-dir { font: 22px "Noto Sans CJK SC", sans-serif; fill: #8d9198; text-anchor: middle; }
.wcs { font: 14px "Liberation Sans", sans-serif; fill: #5c5f6e; }

/* command line */
.cmd { position: absolute; left: 384px; bottom: 0; width: 1150px; height: 34px; display: flex; }
.cmd-side { width: 71px; flex: none; background: #2b323d; border-radius: 3px 0 0 3px; display: flex; align-items: center; padding-left: 6px; }
.cmd-grab { width: 5px; height: 26px; background-image: radial-gradient(#b5b5b5 1.200px, transparent 1.400px); background-size: 5px 4px; }
.cmd-x { width: 12px; height: 12px; margin-left: 7px; }
.cmd-w { width: 20px; height: 24px; margin-left: 10px; }
.cmd-input { flex: 1; margin: 1px 0; background: #bcbcbc; display: flex; align-items: center; padding-left: 6px; border-radius: 2px 0 0 2px; }
.cmd-ic { width: 20px; height: 22px; }
.dd-cmd { margin-left: 2px; border-top-color: #555; }
.cmd-text { margin-left: 11px; font-size: 15px; font-style: italic; color: #6d6d6d; letter-spacing: .6px; }
.cmd-up { margin-left: auto; margin-right: 5px; width: 0; height: 0; border-left: 5px solid transparent; border-right: 5px solid transparent; border-bottom: 6px solid #555; }

/* status bar */
.status { height: 35px; flex: none; display: flex; align-items: center; position: relative; font-size: 14.5px; }
.menu { width: 22px; height: 20px; margin-left: 19px; }
.mtab { width: 72px; height: 30px; margin: 0 0 5px 10px; background: #3b4453; clip-path: polygon(8px 0, 100% 0, calc(100% - 8px) 100%, 0 100%); display: flex; align-items: center; justify-content: center; color: #fff; }
.mtab b { font-weight: 400; }
.ltab { margin: 0 0 4px 10px; width: 38px; white-space: nowrap; font-size: 14px; }
.l2 { margin-left: 15px; }
.s-a { margin: 0 0 4px 16px; }
.s-b { margin: 0 0 4px 15px; }
.p-s { margin: 0 0 4px 17px; }
.s-c { margin: 0 0 4px 15px; }
.tray { position: absolute; left: 444px; top: 2px; height: 30px; display: flex; }
.si { width: 30px; height: 30px; margin-right: 1px; flex: none; background: #3b4453; display: flex; align-items: center; justify-content: center; gap: 6px; white-space: nowrap; color: #e6e6e6; }
.si svg { width: 22px; height: 22px; }
.si em { font-style: normal; }
.si .dd { border-left-width: 4px; border-right-width: 4px; border-top-width: 5px; }
.si.on { background: #5b8bbf; }
.coords { width: 188px; margin-right: 3px; justify-content: flex-end; padding-right: 6px; letter-spacing: .1px; }
.w5 { width: 5px; } .w19 { width: 19px; } .w22 { width: 22px; } .w27 { width: 27px; } .w28 { width: 28px; } .w29 { width: 29px; } .w33 { width: 33px; } .w35 { width: 35px; } .w46 { width: 46px; } .w50 { width: 50px; } .w54 { width: 54px; } .w116 { width: 116px; }
.gap { margin-right: 2px; }
.gap2 { margin-right: 3px; }
.scale { justify-content: flex-start; padding-left: 0; gap: 8px; font-size: 14px; }
.scale em { margin-left: 2px; }
.units { width: 121px; justify-content: flex-start; padding-left: 5px; margin-right: 2px; gap: 0; }
.units em { margin-left: 11px; }
.units .dd { margin-left: auto; margin-right: 5px; }

/* expanded draw panel */
.draw-panel { position: absolute; left: 2px; top: 140px; width: 261px; height: 181px; background: #3b4453; }
.draw-row { display: flex; height: 92px; }
.db { height: 92px; flex: none; display: flex; flex-direction: column; align-items: center; }
.db svg { height: 46px; margin-top: 3px; }
.db span { font-size: 15px; line-height: 22px; color: #e4e4e4; white-space: nowrap; }
.d1 { width: 50px; } .d1 svg { width: 50px; }
.d2 { width: 49px; background: #2a313c; } .d2 svg { width: 49px; }
.d3 { width: 53px; } .d3 svg { width: 53px; }
.d4 { width: 52px; } .d4 svg { width: 52px; }
.dm { width: 57px; padding-top: 5px; display: flex; flex-direction: column; gap: 11px; }
.dmi { display: flex; align-items: center; gap: 7px; padding-left: 5px; }
.dmi svg { width: 22px; height: 20px; }
.dmi .dd { border-left-width: 4px; border-right-width: 4px; border-top-width: 5px; }
.draw-small { display: flex; gap: 6px; padding: 9px 0 0 3px; }
.draw-small svg { width: 24px; height: 22px; }
.draw-small.s2 { gap: 13px; padding: 11px 0 0 4px; }
.draw-small.s2 svg { width: 22px; height: 18px; }
.draw-small.s2 .hatch { height: 22px; margin-top: -2px; }

/* tooltip */
.tooltip { position: absolute; left: 70px; top: 211px; width: 432px; height: 448px; background: #eeeeee; border-radius: 3px; padding: 11px 10px 0; color: #555; font-size: 15px; box-shadow: 0 0 2px rgba(0,0,0,.4); }
.tt-title, .tt-help { font-weight: 700; color: #4c4c4c; line-height: 20px; font-size: 14.6px; }
.tt-sub { margin-top: 7px; line-height: 20px; }
.tt-body { margin-top: 22px; line-height: 20px; white-space: nowrap; }
.tt-fig { margin: 39px 0 0 -10px; }
.tt-x { fill: none; stroke: #2cb81f; stroke-width: 3; }
.tt-n { font: bold 17px "DejaVu Sans", sans-serif; fill: #2cb81f; text-anchor: middle; }
.tt-sep { height: 1px; background: #bcbcbc; margin: 31px -2px 0 -8px; }
.tt-cmd { margin-top: 6px; display: flex; align-items: center; gap: 5px; height: 20px; }
.tt-cmd svg { width: 20px; height: 19px; }
.tt-cmd b { font: 700 15px "Noto Sans", sans-serif; color: #4c4c4c; }
.tt-help { margin-top: 9px; }
```
